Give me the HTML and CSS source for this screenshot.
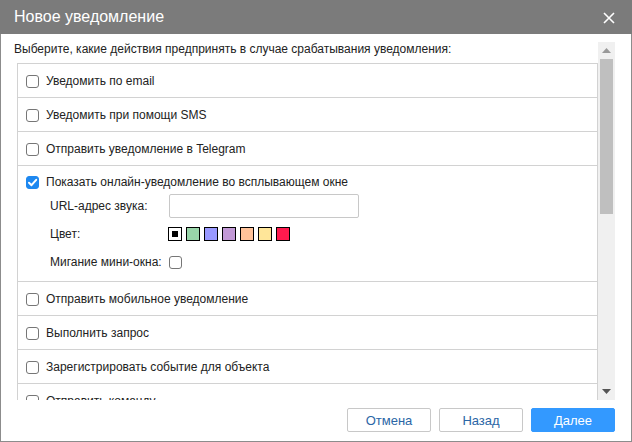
FILE: index.html
```html
<!DOCTYPE html>
<html lang="ru">
<head>
<meta charset="utf-8">
<title>Новое уведомление</title>
<link rel="stylesheet" href="styles.css">
</head>
<body>
<div class="dialog">
  <div class="titlebar">
    <span class="title">Новое уведомление</span>
    <svg class="close" width="12" height="12" viewBox="0 0 12 12"><path d="M1 1 L11 11 M11 1 L1 11" stroke="#fff" stroke-width="1.6" fill="none"/></svg>
  </div>
  <div class="body">
    <div class="scroll">
      <div class="content">
        <div class="desc">Выберите, какие действия предпринять в случае срабатывания уведомления:</div>
        <div class="list">
          <div class="row"><span class="cb"></span><span>Уведомить по email</span></div>
          <div class="row"><span class="cb"></span><span>Уведомить при помощи SMS</span></div>
          <div class="row"><span class="cb"></span><span>Отправить уведомление в Telegram</span></div>
          <div class="row expanded">
            <div class="row-head"><span class="cb checked"><svg width="13" height="13" viewBox="0 0 13 13"><path d="M3 6.8 L5.5 9.2 L10.2 3.8" stroke="#fff" stroke-width="2" fill="none" stroke-linecap="round" stroke-linejoin="round"/></svg></span><span>Показать онлайн-уведомление во всплывающем окне</span></div>
            <div class="form">
              <div class="label">URL-адрес звука:</div>
              <div class="field"><span class="input"></span></div>
              <div class="label">Цвет:</div>
              <div class="field swatches">
                <span class="sw selected"></span>
                <span class="sw c1"></span>
                <span class="sw c2"></span>
                <span class="sw c3"></span>
                <span class="sw c4"></span>
                <span class="sw c5"></span>
                <span class="sw c6"></span>
              </div>
              <div class="label">Мигание мини-окна:</div>
              <div class="field"><span class="cb"></span></div>
            </div>
          </div>
          <div class="row"><span class="cb"></span><span>Отправить мобильное уведомление</span></div>
          <div class="row"><span class="cb"></span><span>Выполнить запрос</span></div>
          <div class="row"><span class="cb"></span><span>Зарегистрировать событие для объекта</span></div>
          <div class="row"><span class="cb"></span><span>Отправить команду</span></div>
        </div>
      </div>
      <div class="scrollbar">
        <div class="arrow up"><svg width="9" height="5" viewBox="0 0 9 5"><path d="M0 5 L4.5 0 L9 5 Z" fill="#999"/></svg></div>
        <div class="track"><div class="thumb"></div></div>
        <div class="arrow down"><svg width="9" height="5" viewBox="0 0 9 5"><path d="M0 0 L4.5 5 L9 0 Z" fill="#555"/></svg></div>
      </div>
    </div>
  </div>
  <div class="footer">
    <button class="btn">Отмена</button>
    <button class="btn">Назад</button>
    <button class="btn primary">Далее</button>
  </div>
</div>
</body>
</html>
```

FILE: styles.css
```css
* { box-sizing: border-box; }
html, body { margin: 0; padding: 0; }
body {
  font-family: "Liberation Sans", Arial, sans-serif;
  font-size: 12px;
  color: #222;
  background: #fff;
}
.dialog {
  width: 632px;
  height: 442px;
  border: 1px solid #8c8c8c;
  border-top: none;
  display: flex;
  flex-direction: column;
  background: #fff;
}
.titlebar {
  height: 34px;
  flex: none;
  background: #7b7b7b;
  margin: 0 -1px;
  display: flex;
  align-items: center;
  justify-content: space-between;
  padding: 0 17px 0 14px;
}
.title {
  color: #fff;
  font-size: 16px;
}
.close { display: block; margin-top: 1px; }
.body {
  flex: 1;
  padding: 8px 16px 0 13px;
  display: flex;
  flex-direction: column;
  min-height: 0;
}
.scroll {
  height: 358px;
  display: flex;
}
.content {
  flex: 1;
  overflow: hidden;
}
.desc {
  line-height: 15px;
  height: 21px;
}
.list {
  margin-left: 3px;
  border: 1px solid #d2d2d2;
  border-bottom: none;
}
.row {
  height: 34px;
  border-bottom: 1px solid #d2d2d2;
  display: flex;
  align-items: center;
  padding-left: 8px;
}
.row.expanded {
  height: 116px;
  display: block;
  padding-top: 8px;
}
.row-head {
  display: flex;
  align-items: center;
  height: 15px;
}
.cb {
  width: 13px;
  height: 13px;
  border: 1px solid #767676;
  border-radius: 3px;
  background: #fff;
  margin-right: 7px;
  margin-top: 2px;
  flex: none;
  display: inline-block;
}
.cb.checked {
  background: #1e88f0;
  border-color: #1e88f0;
}
.cb.checked svg {
  display: block;
  margin: -1px;
}
.form {
  margin-top: 3px;
  padding-left: 24px;
  display: grid;
  grid-template-columns: 119px 200px;
  grid-auto-rows: 28px;
}
.label {
  display: flex;
  align-items: center;
}
.field {
  display: flex;
  align-items: center;
}
.input {
  display: block;
  width: 190px;
  height: 24px;
  border: 1px solid #c8c8c8;
  border-radius: 2px;
}
.swatches { gap: 4px; margin-left: -1px; }
.sw {
  width: 14px;
  height: 14px;
  border: 1px solid #000;
  display: block;
}
.sw.selected {
  background: #fff;
  position: relative;
}
.sw.selected::after {
  content: "";
  position: absolute;
  left: 3px;
  top: 3px;
  width: 6px;
  height: 6px;
  background: #000;
}
.sw.c1 { background: #99d6aa; }
.sw.c2 { background: #9999ff; }
.sw.c3 { background: #c299d6; }
.sw.c4 { background: #ffc299; }
.sw.c5 { background: #ffe699; }
.sw.c6 { background: #ff1a4d; }
.field .cb { margin-top: 1px; }
.scrollbar {
  width: 17px;
  flex: none;
  background: #f0f0f0;
  display: flex;
  flex-direction: column;
}
.arrow {
  height: 17px;
  display: flex;
  align-items: center;
  justify-content: center;
}
.track {
  flex: 1;
  padding: 0 2px;
}
.thumb {
  height: 155px;
  background: #bfbfbf;
}
.footer {
  flex: none;
  height: 41px;
  display: flex;
  justify-content: flex-end;
  gap: 8px;
  padding: 8px 16px 0 0;
}
.btn {
  width: 84px;
  height: 24px;
  border: 1px solid #c8c8c8;
  border-radius: 2px;
  background: #fff;
  color: #2b66a6;
  font-family: "Liberation Sans", Arial, sans-serif;
  font-size: 13px;
  padding: 0;
}
.btn.primary {
  background: #3399ff;
  border-color: #3399ff;
  color: #fff;
}
```
